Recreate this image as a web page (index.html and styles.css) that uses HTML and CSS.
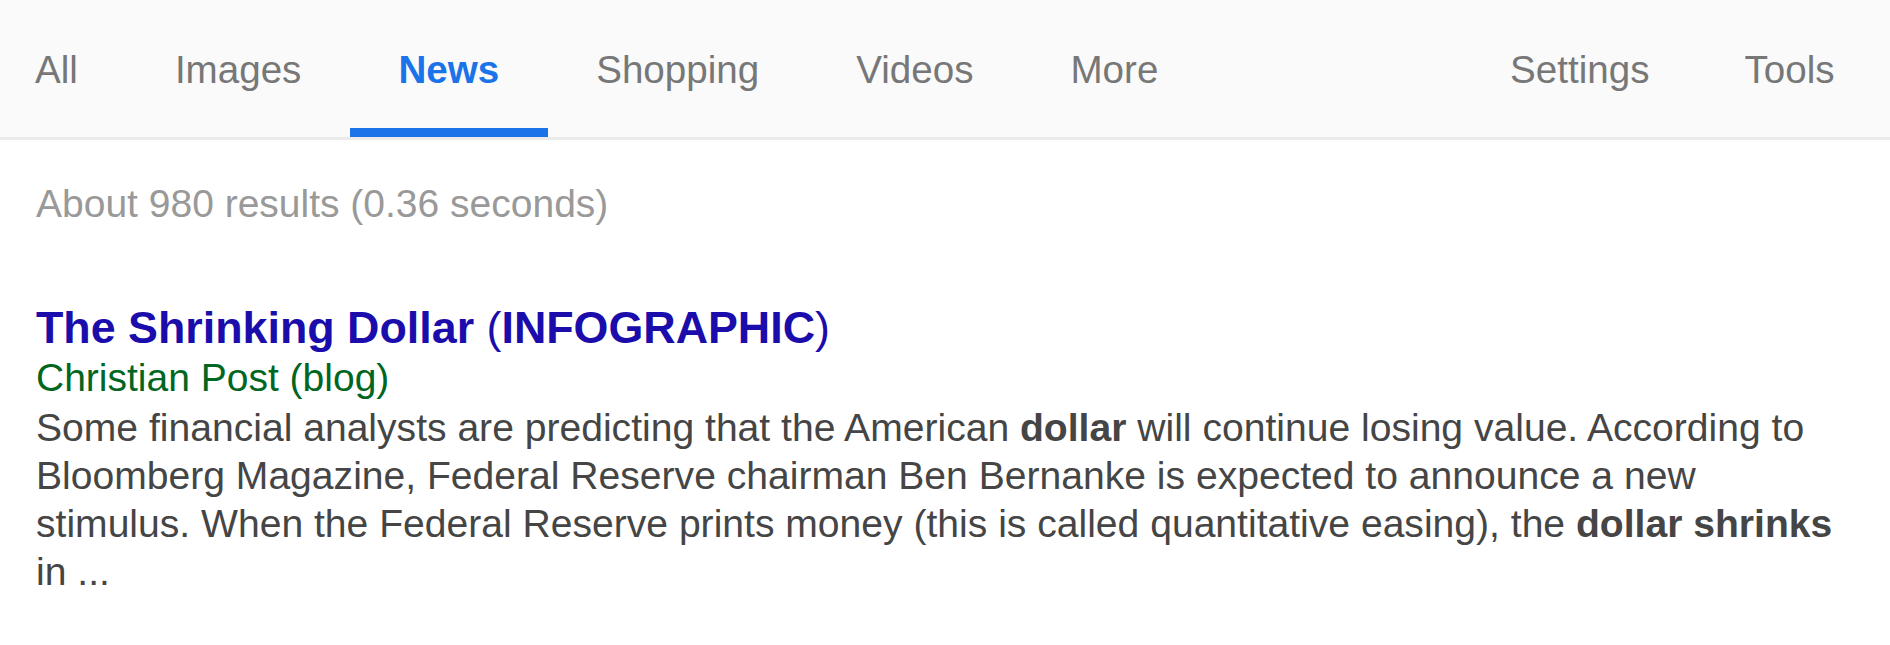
FILE: index.html
```html
<!DOCTYPE html>
<html lang="en">
<head>
<meta charset="utf-8">
<title>News results</title>
<link rel="stylesheet" href="styles.css">
</head>
<body>
<nav class="tabs">
  <div class="tab-group">
    <a class="tab first">All</a>
    <a class="tab">Images</a>
    <a class="tab active">News</a>
    <a class="tab">Shopping</a>
    <a class="tab">Videos</a>
    <a class="tab">More</a>
  </div>
  <div class="tab-group right">
    <a class="tab">Settings</a>
    <a class="tab">Tools</a>
  </div>
</nav>
<main class="results">
  <div class="stats">About 980 results (0.36 seconds)</div>
  <div class="result">
    <h3 class="title"><a><b>The Shrinking Dollar</b> (<b>INFOGRAPHIC</b>)</a></h3>
    <div class="source">Christian Post (blog)</div>
    <div class="snippet">Some financial analysts are predicting that the American <b>dollar</b> will continue losing value. According to Bloomberg Magazine, Federal Reserve chairman Ben Bernanke is expected to announce a new stimulus. When the Federal Reserve prints money (this is called quantitative easing), the <b>dollar shrinks</b> in ...</div>
  </div>
</main>
</body>
</html>
```
FILE: styles.css
```css
html, body {
  margin: 0;
  padding: 0;
  background: #ffffff;
  font-family: "Liberation Sans", Arial, sans-serif;
}

.tabs {
  display: flex;
  justify-content: space-between;
  background: #fafafa;
  border-bottom: 3px solid #ebebeb;
  padding: 0 8px 0 35px;
}

.tab-group {
  display: flex;
}

.tab {
  display: block;
  font-size: 38.6px;
  line-height: 43px;
  color: #777777;
  padding: 48px 48.5px 37px;
  border-bottom: 9px solid transparent;
  white-space: nowrap;
  cursor: pointer;
}

.tab.first {
  padding-left: 0;
}

.tab-group.right .tab {
  padding-left: 47.5px;
  padding-right: 47.5px;
}

.tab.active {
  color: #1a73e8;
  font-weight: bold;
  border-bottom-color: #1a73e8;
}

.results {
  padding: 0 0 0 36px;
  max-width: 1800px;
}

.stats {
  font-size: 39px;
  line-height: 48px;
  color: #999999;
  margin-top: 40px;
}

.result {
  margin-top: 72px;
}

.title {
  margin: 0;
  font-size: 44.8px;
  line-height: 54px;
  font-weight: normal;
}

.title a {
  color: #1a0dab;
  text-decoration: none;
}

.title b {
  font-weight: bold;
}

.source {
  font-size: 39px;
  line-height: 48px;
  color: #006621;
}

.snippet {
  margin-top: 2px;
  font-size: 39.1px;
  line-height: 48px;
  color: #454545;
}

.snippet b {
  font-weight: bold;
}
```
